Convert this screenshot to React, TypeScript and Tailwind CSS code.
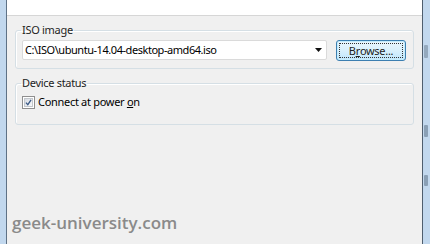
import React from 'react';

const uiFont = { fontFamily: '"Noto Sans", "Open Sans", sans-serif' };

const Checkbox: React.FC = () => (
    <div className="w-[13px] h-[13px] border border-[#8f8f8f] bg-white p-[1px] shrink-0">
        <div className="w-full h-full bg-gradient-to-br from-[#d6dbe2] to-[#f8f9fb] border border-[#c3c7cc] flex items-center justify-center">
            <svg width="9" height="9" viewBox="0 0 9 9">
                <path d="M1.2 4.6 L3.6 7.2 L7.8 1.2" fill="none" stroke="#3b5a86" strokeWidth="1.7" />
            </svg>
        </div>
    </div>
);

const App: React.FC = () => {
    return (
        <div className="w-[430px] h-[244px] flex bg-[#f0f0f0] overflow-hidden text-[11px] tracking-[-0.3px] text-black" style={uiFont}>
            {/* left window frame */}
            <div className="w-[7px] shrink-0 bg-[#c2d8ee] border-r border-[#5f7286]"></div>

            <div className="flex-1 flex flex-col">
                <div className="h-[16px] shrink-0 bg-white border-b border-[#d6d6d6]"></div>

                <div className="px-[8px]">
                    <fieldset className="mt-[6px] border border-[#d5dfe5] rounded-[3px] pl-[6px] pr-[7px] pb-[7px] shadow-[inset_1px_1px_0_#fff]">
                        <legend className="px-[1px] -ml-[1px] leading-[16px] text-[#1e1e1e]">ISO image</legend>
                        <div className="mt-[2px] flex items-start gap-[9px]">
                            <div className="w-[305px] h-[20px] bg-white border border-[#dadada] rounded-[2px] flex items-center pl-[2px] pr-[4px]">
                                <span className="flex-1 tracking-[-0.45px]">C:\ISO\ubuntu-14.04-desktop-amd64.iso</span>
                                <svg width="7" height="4" viewBox="0 0 7 4">
                                    <path d="M0 0 H7 L3.5 4 Z" fill="#111" />
                                </svg>
                            </div>
                            <button className="w-[70px] h-[21px] rounded-[3px] border border-[#3c7fb1] bg-gradient-to-b from-[#eaf6fd] via-[#d9f0fc] to-[#bee6fd] p-[2px] shadow-[inset_0_0_0_1px_#c5ecfc]">
                                <div className="w-full h-full border border-dotted border-[#333] flex items-center justify-center leading-none text-[#222]">
                                    B<span className="underline">r</span>owse...
                                </div>
                            </button>
                        </div>
                    </fieldset>

                    <fieldset className="mt-[6px] border border-[#d5dfe5] rounded-[3px] pl-[6px] pr-[7px] pb-[15px] shadow-[inset_1px_1px_0_#fff]">
                        <legend className="px-[1px] -ml-[1px] leading-[16px] text-[#1e1e1e]">Device status</legend>
                        <div className="mt-[4px] flex items-center gap-[3px] h-[14px]">
                            <Checkbox />
                            <span>
                                Connect at power <span className="underline">o</span>n
                            </span>
                        </div>
                    </fieldset>
                </div>

                <div
                    className="mt-[89px] ml-[5px] text-[17px] font-semibold leading-none tracking-normal text-[#8a8a8a]"
                    style={{ fontFamily: '"Open Sans", sans-serif' }}
                >
                    geek-university.com
                </div>
            </div>

            {/* right window frame */}
            <div className="w-[8px] shrink-0 bg-[#c2d8ee] border-l border-[#4f5e6e] flex flex-col">
                <div className="mt-[45px] ml-[1px] w-[4px] h-[13px] bg-[#94a9be] rounded-[1px]"></div>
                <div className="mt-[67px] ml-[1px] w-[4px] h-[12px] bg-[#8aa0b6] rounded-[1px]"></div>
                <div className="mt-[38px] ml-[1px] w-[4px] h-[11px] bg-[#8aa0b6] rounded-[1px]"></div>
            </div>
        </div>
    );
};

export default App;
